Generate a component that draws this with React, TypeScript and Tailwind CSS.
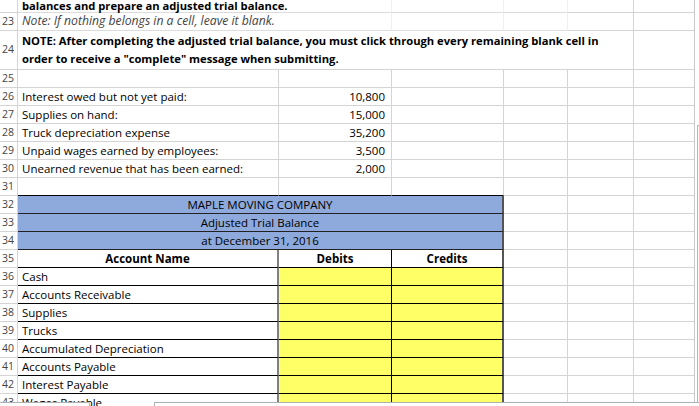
import React from 'react';

const facts: [number, string, string][] = [
  [26, 'Interest owed but not yet paid:', '10,800'],
  [27, 'Supplies on hand:', '15,000'],
  [28, 'Truck depreciation expense', '35,200'],
  [29, 'Unpaid wages earned by employees:', '3,500'],
  [30, 'Unearned revenue that has been earned:', '2,000'],
];

const accounts = [
  'Cash',
  'Accounts Receivable',
  'Supplies',
  'Trucks',
  'Accumulated Depreciation',
  'Accounts Payable',
  'Interest Payable',
  'Wages Payable',
];

const titles = ['MAPLE MOVING COMPANY', 'Adjusted Trial Balance', 'at December 31, 2016'];

function Hdr({ n }: { n?: number }) {
  return (
    <div className="w-[18px] shrink-0 border-r border-b border-[#d4d4d4] text-[10.5px] text-[#444] pl-[2px] flex items-center">
      {n}
    </div>
  );
}

// columns D, E, F — plain grid cells
function Tail() {
  return (
    <>
      <div className="w-[64px] shrink-0 border-r border-b border-[#d4d4d4]" />
      <div className="w-[66px] shrink-0 border-r border-b border-[#d4d4d4]" />
      <div className="w-[61px] shrink-0 border-r border-b border-[#d4d4d4]" />
    </>
  );
}

function Row({ h = 'h-[18px]', children }: { h?: string; children: React.ReactNode }) {
  return <div className={`flex ${h}`}>{children}</div>;
}

export default function App() {
  return (
    <div className="relative w-[699px] h-[406px] overflow-hidden bg-white text-black font-['Open_Sans','Liberation_Sans',sans-serif] text-[11.5px]">
      <div className="flex">
        <div className="w-[694px]">
          {/* row 22 (cut off at top) */}
          <Row h="h-[13px]">
            <Hdr />
            <div className="w-[261px] shrink-0 border-b border-[#dcdcdc] pl-[4px] flex items-end whitespace-nowrap font-bold text-[11.2px] leading-[12px]">
              balances and prepare an adjusted trial balance.
            </div>
            <div className="w-[113px] shrink-0 border-r border-b border-r-[#efefef] border-b-[#dcdcdc]" />
            <div className="w-[112px] shrink-0 border-r border-b border-r-[#efefef] border-b-[#dcdcdc]" />
            <div className="w-[64px] shrink-0 border-r border-b border-r-[#efefef] border-b-[#dcdcdc]" />
            <div className="w-[66px] shrink-0 border-r border-b border-[#d4d4d4]" />
            <div className="w-[61px] shrink-0 border-r border-b border-[#d4d4d4]" />
          </Row>

          {/* row 23 */}
          <Row>
            <Hdr n={23} />
            <div className="w-[261px] shrink-0 border-b border-[#dcdcdc] pl-[4px] flex items-center whitespace-nowrap italic text-[12.2px] text-[#444]">
              Note: If nothing belongs in a cell, leave it blank.
            </div>
            <div className="w-[113px] shrink-0 border-r border-b border-r-[#efefef] border-b-[#dcdcdc]" />
            <div className="w-[112px] shrink-0 border-r border-b border-r-[#efefef] border-b-[#dcdcdc]" />
            <div className="w-[64px] shrink-0 border-r border-b border-r-[#efefef] border-b-[#dcdcdc]" />
            <div className="w-[66px] shrink-0 border-r border-b border-[#d4d4d4]" />
            <div className="w-[61px] shrink-0 border-r border-b border-[#d4d4d4]" />
          </Row>

          {/* row 24 — merged A:E */}
          <Row h="h-[39px]">
            <Hdr n={24} />
            <div className="w-[616px] shrink-0 border-r border-b border-[#d4d4d4] pl-[4px] flex items-end pb-[1px] font-bold text-[11.2px] leading-[18px] whitespace-nowrap">
              <div>
                NOTE: After completing the adjusted trial balance, you must click through every remaining blank cell in
                <br />
                order to receive a "complete" message when submitting.
              </div>
            </div>
            <div className="w-[61px] shrink-0 border-r border-b border-[#d4d4d4]" />
          </Row>

          {/* row 25 */}
          <Row>
            <Hdr n={25} />
            <div className="w-[261px] shrink-0 border-r border-b border-[#d4d4d4]" />
            <div className="w-[113px] shrink-0 border-r border-b border-[#d4d4d4]" />
            <div className="w-[112px] shrink-0 border-r border-b border-[#d4d4d4]" />
            <Tail />
          </Row>

          {facts.map(([n, label, amt]) => (
            <Row key={n}>
              <Hdr n={n} />
              <div className="w-[261px] shrink-0 border-r border-b border-[#d4d4d4] pl-[4px] flex items-center whitespace-nowrap">
                {label}
              </div>
              <div className="w-[113px] shrink-0 border-r border-b border-[#d4d4d4] pr-[6px] flex items-center justify-end">
                {amt}
              </div>
              <div className="w-[112px] shrink-0 border-r border-b border-[#d4d4d4]" />
              <Tail />
            </Row>
          ))}

          {/* row 31 — top edge of the trial balance */}
          <Row>
            <Hdr n={31} />
            <div className="w-[261px] shrink-0 border-r border-b border-r-[#d4d4d4] border-b-black" />
            <div className="w-[113px] shrink-0 border-r border-b border-r-[#d4d4d4] border-b-black" />
            <div className="w-[112px] shrink-0 border-r border-b border-r-[#d4d4d4] border-b-black" />
            <Tail />
          </Row>

          {titles.map((t, i) => (
            <Row key={t}>
              <Hdr n={32 + i} />
              <div className="w-[486px] shrink-0 bg-[#8ea9db] border-r-2 border-b border-r-[#555] border-b-[#222] flex items-center justify-center whitespace-nowrap">
                {t}
              </div>
              <Tail />
            </Row>
          ))}

          {/* row 35 — column headings */}
          <Row>
            <Hdr n={35} />
            <div className="w-[261px] shrink-0 border-r-2 border-b border-r-[#808080] border-b-black flex items-center justify-center font-bold">
              Account Name
            </div>
            <div className="w-[113px] shrink-0 border-r border-b border-black flex items-center justify-center font-bold">
              Debits
            </div>
            <div className="w-[112px] shrink-0 border-r-2 border-b border-r-[#555] border-b-black flex items-center justify-center font-bold">
              Credits
            </div>
            <Tail />
          </Row>

          {accounts.map((a, i) => (
            <Row key={a}>
              <Hdr n={36 + i} />
              <div className="w-[261px] shrink-0 border-r-2 border-b border-r-[#808080] border-b-black pl-[4px] flex items-center whitespace-nowrap">
                {a}
              </div>
              <div className="w-[113px] shrink-0 bg-[#ffff66] border-r border-b border-black" />
              <div className="w-[112px] shrink-0 bg-[#ffff66] border-r-2 border-b border-r-[#555] border-b-black" />
              <Tail />
            </Row>
          ))}
        </div>

        {/* right edge / scrollbar strip */}
        <div className="w-[5px] h-[406px] flex flex-col border-l border-[#c8c8c8]">
          <div className="h-[125px]" />
          <div className="flex-1 ml-[2px] border-l border-t border-[#b8b8b8] bg-[#f7f7f7]" />
        </div>
      </div>

      {/* bottom tabs overlay */}
      <div className="absolute left-0 top-[402px] w-[90px] h-[6px] bg-white border-t border-r border-[#b0b0b0] rounded-tr-[2px]" />
      <div className="absolute left-[154px] top-[402px] w-[545px] h-[6px] bg-white border-t border-l border-[#b0b0b0]" />
    </div>
  );
}
